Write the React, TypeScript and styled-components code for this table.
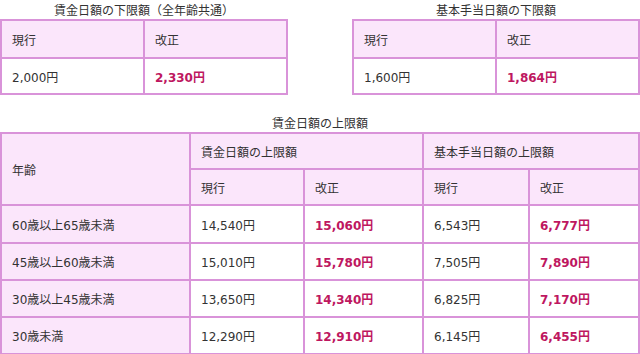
import React from "react";
import styled, { createGlobalStyle } from "styled-components";

const GlobalStyle = createGlobalStyle`
  body {
    margin: 0;
    background: #ffffff;
    font-family: "DejaVu Sans", "Noto Sans CJK JP", sans-serif;
    font-size: 12px;
    color: #333333;
  }
`;

const BORDER = "#d993d9";
const HEAD_BG = "#fbe6fb";

const Page = styled.div`
  width: 640px;
  display: flex;
  flex-direction: column;
`;

const TopRow = styled.div`
  display: flex;
  justify-content: space-between;
`;

const Block = styled.div<{ $width: number }>`
  width: ${({ $width }) => $width}px;
  display: flex;
  flex-direction: column;
`;

const Caption = styled.div<{ $top: number }>`
  text-align: center;
  font-family: "Noto Sans CJK JP", sans-serif;
  font-size: 12px;
  line-height: 16px;
  padding-top: ${({ $top }) => $top}px;
  padding-bottom: 1px;
  color: #333333;
`;

const Table = styled.table`
  width: 100%;
  table-layout: fixed;
  border-collapse: separate;
  border-spacing: 0;
  border: 1px solid ${BORDER};
`;

const Cell = styled.td<{ $head?: boolean; $h: number }>`
  height: ${({ $h }) => $h - 2}px;
  padding: 0 10px;
  border: 1px solid ${BORDER};
  background: ${({ $head }) => ($head ? HEAD_BG : "#ffffff")};
  font-family: "DejaVu Sans", "Noto Sans CJK JP", sans-serif;
  font-size: 12px;
  text-align: left;
  vertical-align: middle;
  white-space: nowrap;
  font-weight: normal;
`;

const New = styled.span`
  color: #be1760;
  font-weight: bold;
`;

const Gap = styled.div`
  height: 20px;
`;

const rows = [
  ["60歳以上65歳未満", "14,540円", "15,060円", "6,543円", "6,777円"],
  ["45歳以上60歳未満", "15,010円", "15,780円", "7,505円", "7,890円"],
  ["30歳以上45歳未満", "13,650円", "14,340円", "6,825円", "7,170円"],
  ["30歳未満", "12,290円", "12,910円", "6,145円", "6,455円"],
];

const rowHeights = [38, 37, 37, 37];

const SmallTable: React.FC<{ title: string; current: string; revised: string }> = ({
  title,
  current,
  revised,
}) => (
  <Block $width={288}>
    <Caption $top={2}>{title}</Caption>
    <Table>
      <tbody>
        <tr>
          <Cell as="th" $head $h={38}>現行</Cell>
          <Cell as="th" $head $h={38}>改正</Cell>
        </tr>
        <tr>
          <Cell $h={36}>{current}</Cell>
          <Cell $h={36}>
            <New>{revised}</New>
          </Cell>
        </tr>
      </tbody>
    </Table>
  </Block>
);

const App: React.FC = () => {
  return (
    <>
      <GlobalStyle />
      <Page>
        <TopRow>
          <SmallTable title="賃金日額の下限額（全年齢共通）" current="2,000円" revised="2,330円" />
          <SmallTable title="基本手当日額の下限額" current="1,600円" revised="1,864円" />
        </TopRow>
        <Gap />
        <Block $width={640}>
          <Caption $top={0}>賃金日額の上限額</Caption>
          <Table>
            <colgroup>
              <col style={{ width: 189 }} />
              <col style={{ width: 114 }} />
              <col style={{ width: 119 }} />
              <col style={{ width: 106 }} />
              <col />
            </colgroup>
            <tbody>
              <tr>
                <Cell as="th" $head $h={36} rowSpan={2}>年齢</Cell>
                <Cell as="th" $head $h={36} colSpan={2}>賃金日額の上限額</Cell>
                <Cell as="th" $head $h={36} colSpan={2}>基本手当日額の上限額</Cell>
              </tr>
              <tr>
                <Cell as="th" $head $h={36}>現行</Cell>
                <Cell as="th" $head $h={36}>改正</Cell>
                <Cell as="th" $head $h={36}>現行</Cell>
                <Cell as="th" $head $h={36}>改正</Cell>
              </tr>
              {rows.map((r, i) => (
                <tr key={r[0]}>
                  <Cell as="th" $head $h={rowHeights[i]}>{r[0]}</Cell>
                  <Cell $h={rowHeights[i]}>{r[1]}</Cell>
                  <Cell $h={rowHeights[i]}>
                    <New>{r[2]}</New>
                  </Cell>
                  <Cell $h={rowHeights[i]}>{r[3]}</Cell>
                  <Cell $h={rowHeights[i]}>
                    <New>{r[4]}</New>
                  </Cell>
                </tr>
              ))}
            </tbody>
          </Table>
        </Block>
      </Page>
    </>
  );
};

export default App;
